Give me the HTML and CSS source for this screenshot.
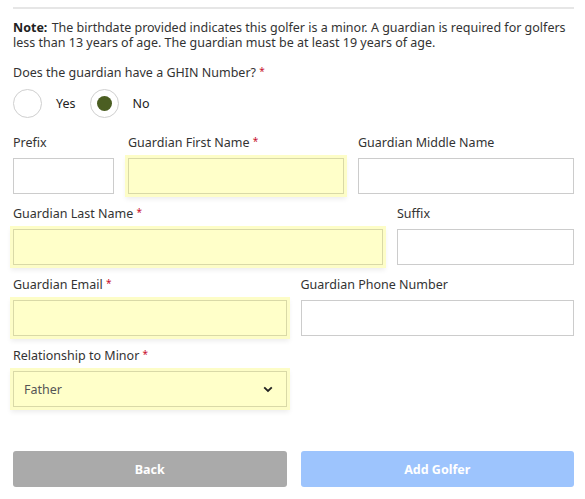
FILE: index.html
```html
<!DOCTYPE html>
<html lang="en">
<head>
<meta charset="utf-8">
<title>Guardian</title>
<link rel="stylesheet" href="styles.css">
</head>
<body>
<div class="page">
  <div class="divider"></div>
  <p class="note"><strong>Note:</strong> The birthdate provided indicates this golfer is a minor. A guardian is required for golfers less than 13 years of age. The guardian must be at least 19 years of age.</p>
  <div class="question">Does the guardian have a GHIN Number? <span class="req">*</span></div>
  <div class="radios">
    <label class="radio"><span class="circle"></span><span class="rlabel">Yes</span></label>
    <label class="radio"><span class="circle checked"><span class="dot"></span></span><span class="rlabel">No</span></label>
  </div>

  <div class="row row-a">
    <div class="field"><div class="flabel">Prefix</div><div class="input"></div></div>
    <div class="field"><div class="flabel">Guardian First Name <span class="req">*</span></div><div class="input hl"></div></div>
    <div class="field"><div class="flabel">Guardian Middle Name</div><div class="input"></div></div>
  </div>
  <div class="row row-b">
    <div class="field"><div class="flabel">Guardian Last Name <span class="req">*</span></div><div class="input hl"></div></div>
    <div class="field"><div class="flabel">Suffix</div><div class="input"></div></div>
  </div>
  <div class="row row-c">
    <div class="field"><div class="flabel">Guardian Email <span class="req">*</span></div><div class="input hl"></div></div>
    <div class="field"><div class="flabel">Guardian Phone Number</div><div class="input"></div></div>
  </div>
  <div class="row row-c">
    <div class="field"><div class="flabel">Relationship to Minor <span class="req">*</span></div>
      <div class="input hl select"><span class="seltext">Father</span>
        <svg class="chev" width="10" height="7" viewBox="0 0 10 7"><path d="M1.2 1.3 L5 5 L8.8 1.3" fill="none" stroke="#222" stroke-width="1.8"/></svg>
      </div>
    </div>
    <div></div>
  </div>

  <div class="buttons">
    <button class="btn back">Back</button>
    <button class="btn add">Add Golfer</button>
  </div>
</div>
</body>
</html>
```

FILE: styles.css
```css
* { box-sizing: border-box; }
html, body { margin: 0; padding: 0; background: #fff; }
body {
  font-family: "Noto Sans", "Open Sans", sans-serif;
  color: #333;
  font-size: 12.5px;
}
.page { padding: 7px 11px 0 13px; }
.divider { height: 2px; background: #e6e6e6; }
.note {
  margin: 11px 0 0;
  font-size: 12.5px;
  line-height: 15px;
  color: #333;
}
.note strong { color: #222; margin-right: 1px; }
.question { margin-top: 15px; line-height: 16px; }
.req { color: #c8102e; font-size: 10px; line-height: 0; position: relative; top: -2px; }
.radios { display: flex; gap: 14px; margin-top: 8px; height: 29px; align-items: center; }
.radio { display: flex; align-items: center; gap: 14px; }
.circle {
  width: 29px; height: 29px; border-radius: 50%;
  border: 1px solid #cfcfcf; background: #fff;
  display: flex; align-items: center; justify-content: center;
}
.dot { width: 15px; height: 15px; border-radius: 50%; background: #4b5e22; }
.rlabel { font-size: 12.5px; color: #222; }

.row { display: grid; gap: 14px; margin-top: 12px; }
.row-a { grid-template-columns: 101px 216px 216px; margin-top: 17px; }
.row-b { grid-template-columns: 370px 177px; }
.row-c { grid-template-columns: 1fr 1fr; }
.flabel { height: 16px; line-height: 16px; margin-bottom: 7px; white-space: nowrap; }
.input {
  height: 36px;
  border: 1px solid #cccccc;
  background: #fff;
}
.input.hl {
  background: #ffffc9;
  border-color: #d9d9a7;
  box-shadow: 0 0 0 3px #fdfdc7, 0 3px 5px 2px rgba(0,0,0,0.08);
}
.select { display: flex; align-items: center; justify-content: space-between; padding: 0 13px 0 10px; }
.seltext { color: #555; }
.chev { display: block; }

.buttons { display: grid; grid-template-columns: 1fr 1fr; gap: 14px; margin-top: 44px; }
.btn {
  height: 36px; border: none; border-radius: 3px;
  color: #fff; font-family: "Noto Sans", sans-serif; font-weight: 700; font-size: 12.5px;
}
.back { background: #aaaaaa; }
.add { background: #9dc4fd; }
```
